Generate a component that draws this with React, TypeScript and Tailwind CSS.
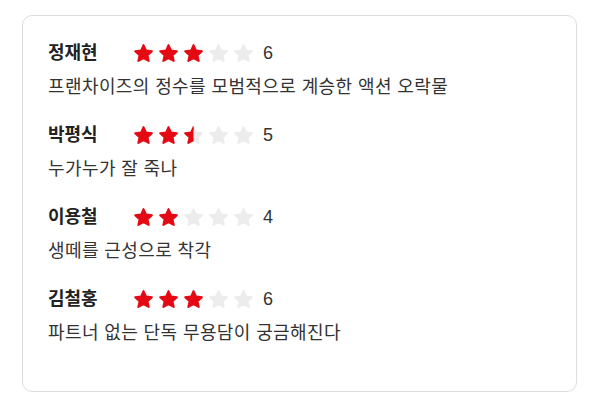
import React from "react";

type Review = { name: string; score: number; comment: string };

const reviews: Review[] = [
  { name: "정재현", score: 6, comment: "프랜차이즈의 정수를 모범적으로 계승한 액션 오락물" },
  { name: "박평식", score: 5, comment: "누가누가 잘 죽나" },
  { name: "이용철", score: 4, comment: "생떼를 근성으로 착각" },
  { name: "김철홍", score: 6, comment: "파트너 없는 단독 무용담이 궁금해진다" },
];

const STAR = "M12 2.4l2.9 6.2 6.7.8-5 4.6 1.4 6.6L12 17.2l-5.9 3.4 1.4-6.6-5-4.6 6.7-.8z";

function Star({ fill, id }: { fill: number; id: string }) {
  // fill: 0, 0.5 or 1
  return (
    <svg width="21" height="21" viewBox="0 0 24 24" className="block">
      <defs>
        <clipPath id={id}>
          <rect x="0" y="0" width={24 * fill} height="24" />
        </clipPath>
      </defs>
      <path d={STAR} fill="#ececec" stroke="#ececec" strokeWidth="2.2" strokeLinejoin="round" />
      {fill > 0 && (
        <path
          d={STAR}
          fill="#e50914"
          stroke="#e50914"
          strokeWidth="2.2"
          strokeLinejoin="round"
          clipPath={`url(#${id})`}
        />
      )}
    </svg>
  );
}

function Stars({ score, idx }: { score: number; idx: number }) {
  const rating = score / 2;
  return (
    <div className="flex items-center gap-[4px]">
      {[0, 1, 2, 3, 4].map((i) => {
        const f = rating >= i + 1 ? 1 : rating >= i + 0.5 ? 0.5 : 0;
        return <Star key={i} fill={f} id={`clip-${idx}-${i}`} />;
      })}
    </div>
  );
}

export default function App() {
  return (
    <div
      className="w-[600px] h-[400px] bg-white pt-[15px] pl-[22px]"
      style={{ fontFamily: '"Liberation Sans", "Noto Sans CJK KR", sans-serif' }}
    >
      <div className="w-[555px] h-[377px] border border-[#dddddd] rounded-[10px] pl-[25px] pt-[25px]">
        <ul className="flex flex-col gap-[24px]">
          {reviews.map((r, idx) => (
            <li key={r.name} className="flex flex-col gap-[10px]">
              <div className="flex items-center h-[24px]">
                <span className="w-[85px] text-[18px] font-bold text-[#222222]">{r.name}</span>
                <Stars score={r.score} idx={idx} />
                <span className="ml-[9px] text-[18px] text-[#333333]">{r.score}</span>
              </div>
              <p className="h-[24px] leading-[24px] text-[18px] tracking-[0.4px] text-[#333333]">{r.comment}</p>
            </li>
          ))}
        </ul>
      </div>
    </div>
  );
}
